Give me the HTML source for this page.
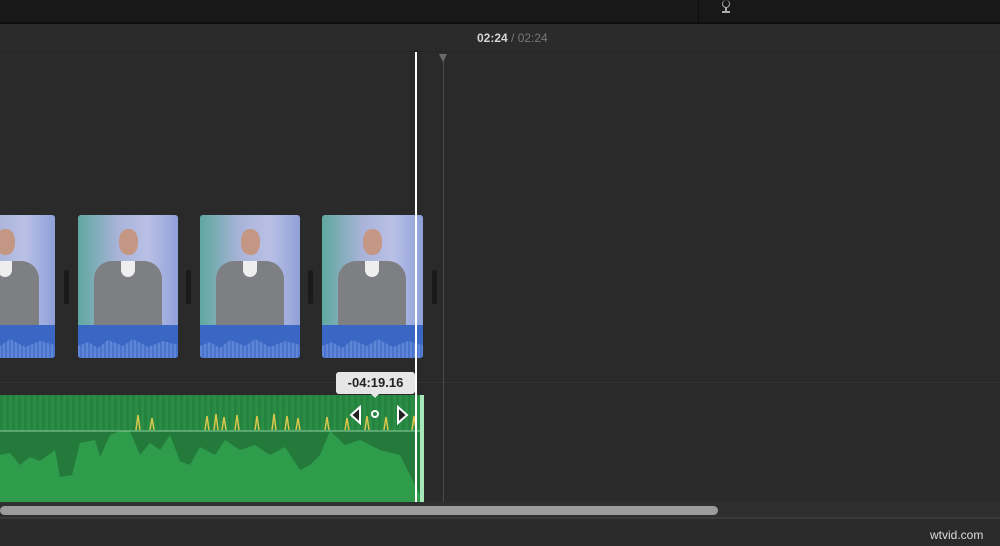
<!DOCTYPE html>
<html><head><style>
*{margin:0;padding:0;box-sizing:border-box}
body{width:1000px;height:546px;background:#2a2a2a;overflow:hidden;position:relative;font-family:"Liberation Sans",sans-serif}
.a{position:absolute}
.clip{position:absolute;top:215px;width:100px;height:143px;border-radius:3px;overflow:hidden;background:#3f63b8}
.vid{position:absolute;left:0;top:0;width:100%;height:110px;background:linear-gradient(90deg,#5fa8a0 0%,#a9b3d8 40%,#b9c0e6 70%,#8fa0d8 100%)}
.body{position:absolute;left:16px;top:46px;width:68px;height:66px;background:#7d7f82;border-radius:18px 18px 0 0}
.head{position:absolute;left:41px;top:14px;width:19px;height:26px;background:#c49784;border-radius:45%}
.shirt{position:absolute;left:43px;top:46px;width:14px;height:16px;background:#eee;border-radius:0 0 7px 7px}
.aud{position:absolute;left:0;top:110px;width:100%;height:33px;background:#3a66c4}
.aud:after{content:"";position:absolute;left:0;right:0;bottom:0;height:20px;background:repeating-linear-gradient(90deg,#5f86d6 0 2px,#4a74cc 2px 4px);clip-path:polygon(0 40%,10% 20%,20% 50%,30% 10%,45% 40%,55% 5%,70% 45%,85% 15%,100% 35%,100% 100%,0 100%)}
.hnd{position:absolute;top:270px;width:5px;height:34px;background:#1a1a1a;border-radius:2px}
</style></head><body>
<div class="a" style="left:0;top:0;width:1000px;height:22px;background:#181818"></div>
<div class="a" style="left:0;top:22px;width:1000px;height:2px;background:#0e0e0e"></div>
<div class="a" style="left:698px;top:0;width:1px;height:22px;background:#0c0c0c"></div>
<div class="a" style="left:722px;top:0;width:8px;height:8px;border:1.5px solid #aaa;border-radius:50%;border-top:none"></div>
<div class="a" style="left:725px;top:7px;width:2px;height:4px;background:#aaa"></div>
<div class="a" style="left:722px;top:11px;width:8px;height:1.5px;background:#aaa"></div>
<div class="a" style="left:0;top:24px;width:1000px;height:28px;background:#2b2b2b;border-bottom:1px solid #252525"></div>
<div class="a" style="left:477px;top:31px;font-size:12px;font-weight:bold;color:#d6d6d6">02:24 <span style="color:#777;font-weight:normal">/ 02:24</span></div>
<div class="a" style="left:0;top:382px;width:1000px;height:1px;background:#333"></div>
<div class="a" style="left:443px;top:56px;width:1px;height:446px;background:#4a4a4a"></div>
<div class="a" style="left:439px;top:54px;width:0;height:0;border-left:4px solid transparent;border-right:4px solid transparent;border-top:8px solid #6a6a6a"></div>

<div class="clip" style="left:-45px"><div class="vid"><div class="body"></div><div class="head"></div><div class="shirt"></div></div><div class="aud"></div></div>
<div class="clip" style="left:78px"><div class="vid"><div class="body"></div><div class="head"></div><div class="shirt"></div></div><div class="aud"></div></div>
<div class="clip" style="left:200px"><div class="vid"><div class="body"></div><div class="head"></div><div class="shirt"></div></div><div class="aud"></div></div>
<div class="clip" style="left:322px;width:101px"><div class="vid"><div class="body"></div><div class="head"></div><div class="shirt"></div></div><div class="aud"></div></div>
<div class="hnd" style="left:64px"></div><div class="hnd" style="left:186px"></div><div class="hnd" style="left:308px"></div><div class="hnd" style="left:432px"></div>

<div class="a" style="left:0;top:395px;width:423px;height:107px;background:#2f9c4c"></div>
<svg class="a" style="left:0;top:395px" width="423" height="107">
<rect x="0" y="0" width="423" height="36" fill="#2a8c45"/>
<path d="M0 36 L0 60 10 58 20 70 30 62 40 66 55 55 60 82 72 80 80 48 95 45 100 62 110 40 120 36Z" fill="#237a3b"/>
<path d="M130 36 L140 60 150 48 160 55 170 40 180 66 190 70 200 52 215 60 225 45 240 55 255 50 270 60 285 52 300 75 310 70 320 60 330 36Z" fill="#237a3b"/>
<path d="M330 36 L345 50 360 45 380 55 400 60 423 106 423 36Z" fill="#237a3b"/>
<path d="M0 0 H423 V36 H0Z" fill="url(#g)" opacity="0.5"/>
<defs><pattern id="g" width="6" height="36" patternUnits="userSpaceOnUse"><rect width="3" height="36" fill="#1f7a38"/></pattern></defs>
<path d="M136 35 l2 -15 l2 15 M150 35 l2 -12 l2 12 M205 35 l2 -14 l2 14 M214 35 l2 -16 l2 16 M222 35 l2 -13 l2 13 M235 35 l2 -15 l2 15 M255 35 l2 -14 l2 14 M272 35 l2 -16 l2 16 M285 35 l2 -14 l2 14 M296 35 l2 -12 l2 12 M325 35 l2 -13 l2 13 M345 35 l2 -12 l2 12 M365 35 l2 -14 l2 14 M384 35 l2 -13 l2 13 M412 35 l2 -14 l2 14" stroke="#d9c64c" stroke-width="1.5" fill="none"/>
<line x1="0" y1="36" x2="423" y2="36" stroke="#8fd0a0" stroke-width="1"/>
<path d="M360 12 l-9 8 l9 8z M398 12 l9 8 l-9 8z" fill="#222" stroke="#fff" stroke-width="2"/>
<circle cx="375" cy="19" r="3" fill="none" stroke="#fff" stroke-width="2"/>
</svg>
<div class="a" style="left:420px;top:395px;width:4px;height:107px;background:#a8e8b8"></div>
<div class="a" style="left:336px;top:372px;width:79px;height:22px;background:#e6e6e6;border-radius:3px;font-size:13px;font-weight:bold;color:#222;text-align:center;line-height:22px">-04:19.16</div>
<div class="a" style="left:371px;top:394px;border-left:4px solid transparent;border-right:4px solid transparent;border-top:4px solid #e6e6e6"></div>
<div class="a" style="left:415px;top:52px;width:1.5px;height:450px;background:#fff"></div>

<div class="a" style="left:0;top:502px;width:1000px;height:16px;background:#2f2f2f"></div>
<div class="a" style="left:0;top:506px;width:718px;height:9px;background:#9c9c9c;border-radius:5px"></div>
<div class="a" style="left:0;top:517px;width:1000px;height:2px;background:#3a3a3a"></div>
<div class="a" style="left:930px;top:528px;font-size:12px;color:#ddd">wtvid.com</div>
</body></html>
